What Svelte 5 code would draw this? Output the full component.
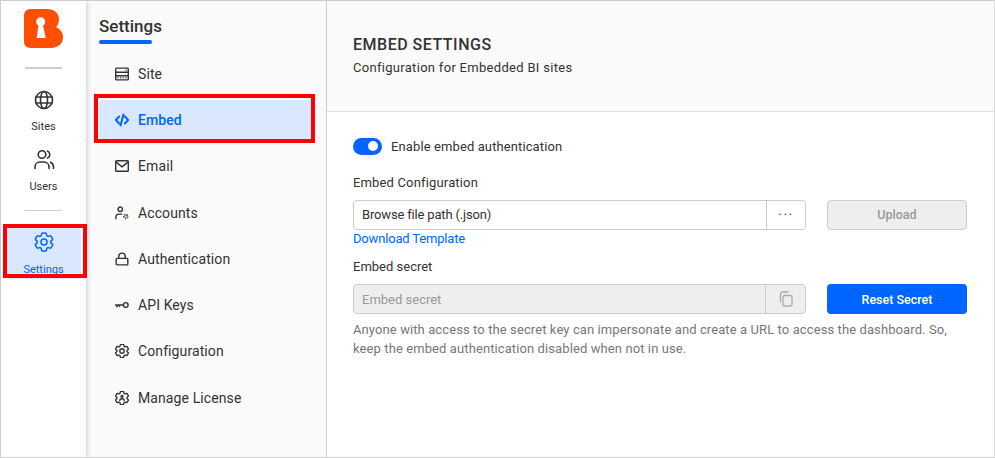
<script lang="ts">
  const gearPath =
    "M9.594 3.94c.09-.542.56-.94 1.11-.94h2.593c.55 0 1.02.398 1.11.94l.213 1.281c.063.374.313.686.645.87.074.04.147.083.22.127.325.196.72.257 1.075.124l1.217-.456a1.125 1.125 0 0 1 1.37.49l1.296 2.247a1.125 1.125 0 0 1-.26 1.431l-1.003.827c-.293.241-.438.613-.43.992a7.723 7.723 0 0 1 0 .255c-.008.378.137.75.43.991l1.004.827c.424.35.534.955.26 1.43l-1.298 2.247a1.125 1.125 0 0 1-1.369.491l-1.217-.456c-.355-.133-.75-.072-1.076.124a6.47 6.47 0 0 1-.22.128c-.331.183-.581.495-.644.869l-.213 1.281c-.09.543-.56.94-1.11.94h-2.594c-.55 0-1.019-.398-1.11-.94l-.213-1.281c-.062-.374-.312-.686-.644-.87a6.52 6.52 0 0 1-.22-.127c-.325-.196-.72-.257-1.076-.124l-1.217.456a1.125 1.125 0 0 1-1.369-.49l-1.297-2.247a1.125 1.125 0 0 1 .26-1.431l1.004-.827c.292-.24.437-.613.43-.991a6.932 6.932 0 0 1 0-.255c.007-.38-.138-.751-.43-.992l-1.004-.827a1.125 1.125 0 0 1-.26-1.43l1.297-2.247a1.125 1.125 0 0 1 1.37-.491l1.216.456c.356.133.751.072 1.076-.124.072-.044.146-.086.22-.128.332-.183.582-.495.644-.869l.214-1.28Z";

  const gearBox = "2.500 2.500 19 19";

  const menu = [
    { label: "Site", icon: "site", box: "0 0 24 24" },
    { label: "Embed", icon: "embed", box: "0 0 24 24", active: true },
    { label: "Email", icon: "email", box: "0 0 24 24" },
    { label: "Accounts", icon: "accounts", box: "0 0 24 24" },
    { label: "Authentication", icon: "lock", box: "0 0 24 24" },
    { label: "API Keys", icon: "key", box: "0 0 24 24" },
    { label: "Configuration", icon: "gear", box: gearBox },
    { label: "Manage License", icon: "license", box: gearBox },
  ];
</script>

<div class="frame">
  <nav class="rail">
    <svg class="logo" viewBox="1 0 40 40" width="40" height="40">
      <path
        fill="#ff4f00"
        d="M8 0H24C31 0 36 4 36 10C36 13.500 35 16 33 18C37 20 40 23 40 28C40 35 35 39 27 39H8C3 39 1 36 1 32V7C1 3 3 0 8 0z"
      />
      <circle cx="17.700" cy="12.700" r="4.500" fill="#fff" />
      <path fill="#fff" d="M15.700 15h4l3 14h-9z" />
    </svg>
    <hr />
    <a class="rail-item first">
      <svg viewBox="0 0 24 24" width="24" height="24" fill="none" stroke="currentColor" stroke-width="1.600">
        <circle cx="12" cy="12" r="8.500" />
        <ellipse cx="12" cy="12" rx="3.500" ry="8.500" />
        <path d="M3.500 9h17M3.500 15h17" />
      </svg>
      <span>Sites</span>
    </a>
    <a class="rail-item">
      <svg viewBox="0 0 24 24" width="24" height="24" fill="none" stroke="currentColor" stroke-width="1.600" stroke-linecap="round">
        <circle cx="10" cy="6.500" r="3.800" />
        <path d="M3 20.500v-1.500c0-2.800 2.200-5 5-5h4c2.800 0 5 2.200 5 5v1.500" />
        <path d="M15.500 3a3.800 3.800 0 0 1 0 7M18.500 14.200c1.700.7 3 2.500 3 4.800v1.500" />
      </svg>
      <span>Users</span>
    </a>
    <hr class="second" />
    <a class="rail-item active">
      <svg viewBox="0 0 24 24" width="24" height="24" fill="none" stroke="currentColor" stroke-width="1.500" stroke-linejoin="round">
        <path d={gearPath} />
        <circle cx="12" cy="12" r="3" />
      </svg>
      <span>Settings</span>
    </a>
  </nav>

  <aside class="panel">
    <h2>Settings</h2>
    <ul>
      {#each menu as item}
        <li>
          <a class="menu-item" class:active={item.active}>
            <svg viewBox={item.box} width="14" height="14" fill="none" stroke="currentColor" stroke-width="2.400" stroke-linecap="round" stroke-linejoin="round">
              {#if item.icon === "site"}
                <rect x="1.200" y="2" width="21.600" height="20" rx="1.500" />
                <path d="M1 9h22M1 15h22" />
                <path d="M5 18.500h.01M9.500 18.500h.01M14 18.500h.01M18.500 18.500h.01M19 5.500h.01" />
              {:else if item.icon === "embed"}
                <path stroke-width="3.400" d="M7 6l-5.500 6L7 18M17 6l5.500 6L17 18M14.500 2.500l-5 19" />
              {:else if item.icon === "email"}
                <rect x="1.200" y="3" width="21.600" height="18" rx="1.500" />
                <path d="M1.500 5l10.500 8.500L22.500 5" />
              {:else if item.icon === "accounts"}
                <circle cx="9" cy="5.500" r="3.800" />
                <path d="M1.500 22v-2.500c0-3 2.500-5.500 5.500-5.500h4.500" />
                <circle cx="18.500" cy="18" r="2.800" stroke-dasharray="2 1.200" stroke-width="4" stroke-linecap="butt" stroke="#555" />
              {:else if item.icon === "lock"}
                <rect x="2" y="11" width="20" height="11" rx="1.500" />
                <path d="M6.500 11V7.500a5.500 5.500 0 0 1 11 0V11" />
              {:else if item.icon === "key"}
                <circle cx="18.500" cy="12" r="4" />
                <path d="M14.500 12H1M3.500 12v3.500M7.500 12v2.500" />
              {:else if item.icon === "gear"}
                <path stroke-width="1.900" d={gearPath} />
                <circle stroke-width="1.900" cx="12" cy="12" r="3" />
              {:else}
                <path stroke-width="1.900" d={gearPath} />
                <circle stroke-width="1.900" cx="12" cy="9.800" r="1.300" />
                <path stroke-width="1.900" d="M9 15.500c0-1.800 1.300-2.500 3-2.500s3 .7 3 2.500" />
              {/if}
            </svg>
            <span>{item.label}</span>
          </a>
        </li>
      {/each}
    </ul>
  </aside>

  <main class="content">
    <header>
      <h1>EMBED SETTINGS</h1>
      <p>Configuration for Embedded BI sites</p>
    </header>
    <section class="form">
      <div class="toggle-row">
        <span class="toggle"><span class="knob"></span></span>
        <span class="toggle-text">Enable embed authentication</span>
      </div>

      <div class="label config-label">Embed Configuration</div>
      <div class="row">
        <div class="field">
          <span class="value browse">Browse file path (.json)</span>
          <span class="addon dots">···</span>
        </div>
        <button class="btn disabled" type="button">Upload</button>
      </div>
      <a class="link">Download Template</a>

      <div class="label secret-label">Embed secret</div>
      <div class="row">
        <div class="field readonly">
          <span class="value placeholder">Embed secret</span>
          <span class="addon copy">
            <svg viewBox="0 0 16 16" width="16" height="16" fill="none" stroke="#aaa" stroke-width="1.300">
              <rect x="5" y="4.500" width="9" height="10.500" rx="1.500" />
              <path d="M2.500 11.500V3a2 2 0 0 1 2-2h6" />
            </svg>
          </span>
        </div>
        <button class="btn primary" type="button">Reset Secret</button>
      </div>
      <p class="help">
        Anyone with access to the secret key can impersonate and create a URL to access the dashboard. So,
        keep the embed authentication disabled when not in use.
      </p>
    </section>
  </main>
</div>

<style>
  :global(body) {
    margin: 0;
    background: #fff;
  }

  .frame {
    display: flex;
    box-sizing: border-box;
    width: 995px;
    height: 458px;
    border: 1px solid #ccc;
    border-right-color: #ddd;
    font-family: Roboto, "Liberation Sans", sans-serif;
    font-size: 13px;
    color: #333;
    overflow: hidden;
  }

  .rail {
    position: relative;
    z-index: 1;
    display: flex;
    flex-direction: column;
    align-items: center;
    flex: 0 0 85px;
    padding-top: 8px;
    box-sizing: border-box;
    background: #fff;
    box-shadow: 2px 0 4px rgba(0, 0, 0, 0.14);
  }

  .logo {
    display: block;
  }

  hr {
    flex: none;
    width: 37px;
    height: 2px;
    margin: 18px 0 0;
    border: 0;
    background: #ccc;
  }

  hr.second {
    height: 1px;
    margin-top: 2px;
  }

  .rail-item {
    display: flex;
    flex-direction: column;
    align-items: center;
    flex: none;
    gap: 8px;
    width: 74px;
    height: 60px;
    box-sizing: border-box;
    font-size: 11px;
    color: #333;
  }

  .rail-item.first {
    margin-top: 19px;
  }

  .rail-item svg {
    display: block;
  }

  .rail-item.active {
    position: relative;
    height: 51px;
    margin-top: 17px;
    padding-top: 2px;
    gap: 9px;
    background: #d9e8ff;
    color: #0066ff;
    border-radius: 2px;
  }

  /* red annotation frames drawn over the screenshot */
  .rail-item.active::after,
  .menu-item.active::after {
    content: "";
    position: absolute;
    border: 4px solid #f00;
  }

  .rail-item.active::after {
    inset: -4px -6px 1px -4px;
  }

  .menu-item.active::after {
    inset: -6px -3px -3px -5px;
  }

  .panel {
    flex: 0 0 241px;
    box-sizing: border-box;
    padding: 15px 14px 0 13px;
    background: #fafafa;
    border-right: 1px solid #ccc;
  }

  h2 {
    width: fit-content;
    margin: 0;
    font-size: 17px;
    font-weight: 500;
    line-height: 20px;
    color: #333;
  }

  h2::after {
    content: "";
    display: block;
    width: 53px;
    height: 4px;
    margin-top: 4px;
    border-radius: 2px;
    background: #0066ff;
  }

  ul {
    list-style: none;
    margin: 10px 0 0;
    padding: 0;
    display: flex;
    flex-direction: column;
    gap: 6.240px;
  }

  li {
    height: 40px;
  }

  .menu-item {
    position: relative;
    display: flex;
    align-items: center;
    gap: 9px;
    height: 100%;
    padding-left: 16px;
    box-sizing: border-box;
    font-size: 14px;
    letter-spacing: 0.1px;
    color: #333;
  }

  .menu-item svg {
    flex: none;
  }

  .menu-item.active {
    background: #d9e8ff;
    color: #0066ff;
    font-weight: 500;
    border-radius: 4px;
  }

  .content {
    flex: 1;
    min-width: 0;
    background: #fff;
  }

  header {
    height: 111px;
    box-sizing: border-box;
    padding: 34px 26px 0;
    background: #fafafa;
    border-bottom: 1px solid #e0e0e0;
  }

  h1 {
    margin: 0;
    font-size: 16px;
    font-weight: 500;
    letter-spacing: 0.5px;
    line-height: 19px;
    color: #333;
  }

  header p {
    margin: 6px 0 0;
    font-size: 13px;
    letter-spacing: 0.3px;
    line-height: 16px;
  }

  .form {
    padding: 25px 27px 0 26px;
  }

  .toggle-row {
    display: flex;
    align-items: center;
    gap: 9px;
    height: 18px;
  }

  .toggle-text {
    letter-spacing: 0.11px;
  }

  .toggle {
    display: flex;
    align-items: center;
    justify-content: flex-end;
    width: 29px;
    height: 17px;
    box-sizing: border-box;
    padding-right: 4px;
    border-radius: 9px;
    background: #0066ff;
  }

  .knob {
    width: 10px;
    height: 10px;
    border-radius: 50%;
    background: #fff;
  }

  .label {
    line-height: 16px;
  }

  .config-label {
    margin-top: 20px;
    letter-spacing: 0.16px;
  }

  .secret-label {
    margin-top: 12px;
  }

  .row {
    display: flex;
    gap: 21px;
    margin-top: 9px;
  }

  .field {
    display: flex;
    flex: 0 0 453px;
    box-sizing: border-box;
    height: 30px;
    border: 1px solid #ccc;
    border-radius: 4px;
    background: #fff;
  }

  .value {
    flex: 1;
    padding-left: 8px;
    line-height: 28px;
  }

  .browse {
    letter-spacing: -0.17px;
  }

  .placeholder {
    padding-top: 1px;
    line-height: 27px;
    color: #999;
  }

  .addon {
    display: flex;
    align-items: center;
    justify-content: center;
    flex: 0 0 38px;
    border-left: 1px solid #ccc;
  }

  .addon.copy {
    flex-basis: 39px;
  }

  .dots {
    font-size: 14px;
    letter-spacing: 1.500px;
    color: #444;
  }

  .readonly {
    background: #eee;
  }

  .btn {
    flex: 0 0 140px;
    height: 30px;
    box-sizing: border-box;
    border-radius: 4px;
    font: 500 12.500px Roboto, "Liberation Sans", sans-serif;
  }

  .disabled {
    padding-bottom: 3px;
    border: 1px solid #ccc;
    background: #eee;
    color: #999;
  }

  .primary {
    border: 0;
    background: #0066ff;
    color: #fff;
  }

  .link {
    display: block;
    margin-top: 1px;
    line-height: 16px;
    letter-spacing: -0.17px;
    color: #0066ff;
  }

  .help {
    margin: 6px 0 0;
    font-size: 13px;
    letter-spacing: 0.1px;
    line-height: 19px;
    color: #777;
  }
</style>
